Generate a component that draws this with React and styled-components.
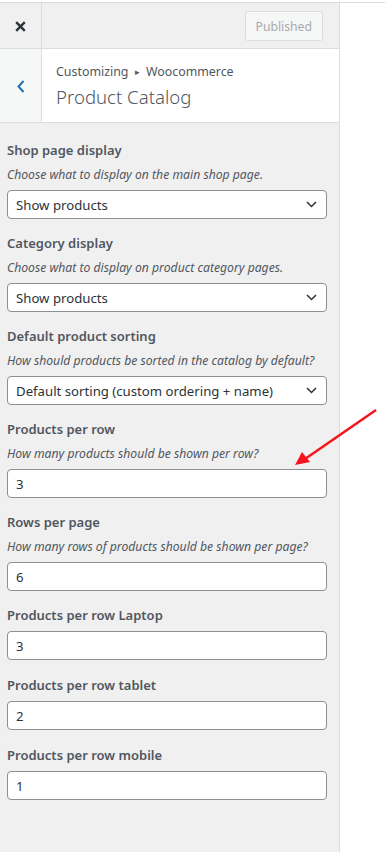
import React from 'react';
import styled, { createGlobalStyle } from 'styled-components';

const GlobalStyle = createGlobalStyle`
  html, body { margin: 0; padding: 0; background: #fff; }
  body { font-family: "Noto Sans", "Open Sans", sans-serif; color: #50575e; }
  * { box-sizing: border-box; }
`;

const fields = [
  { label: 'Shop page display', desc: 'Choose what to display on the main shop page.', type: 'select', value: 'Show products' },
  { label: 'Category display', desc: 'Choose what to display on product category pages.', type: 'select', value: 'Show products' },
  { label: 'Default product sorting', desc: 'How should products be sorted in the catalog by default?', type: 'select', value: 'Default sorting (custom ordering + name)' },
  { label: 'Products per row', desc: 'How many products should be shown per row?', type: 'input', value: '3' },
  { label: 'Rows per page', desc: 'How many rows of products should be shown per page?', type: 'input', value: '6' },
  { label: 'Products per row Laptop', type: 'input', value: '3' },
  { label: 'Products per row tablet', type: 'input', value: '2' },
  { label: 'Products per row mobile', type: 'input', value: '1' },
];

export default function App() {
  return (
    <>
      <GlobalStyle />
      <Page>
        <Panel>
          <TopBar>
            <CloseButton>
              <svg width="11" height="11" viewBox="0 0 11 11">
                <path d="M1.2 1.2 L9.8 9.8 M9.8 1.2 L1.2 9.8" stroke="#2c3338" strokeWidth="2.4" />
              </svg>
            </CloseButton>
            <TopActions>
              <PublishButton>Published</PublishButton>
            </TopActions>
          </TopBar>
          <TitleBar>
            <BackButton>
              <svg width="8" height="13" viewBox="0 0 8 13">
                <path d="M6.5 1 L1.5 6.5 L6.5 12" stroke="#2271b1" strokeWidth="2" fill="none" />
              </svg>
            </BackButton>
            <TitleText>
              <Crumb>Customizing <Tri>▸</Tri> Woocommerce</Crumb>
              <Title>Product Catalog</Title>
            </TitleText>
          </TitleBar>
          <Controls>
            {fields.map((f, i) => (
              <Control key={i} hasDesc={!!f.desc}>
                <Label hasDesc={!!f.desc}>{f.label}</Label>
                {f.desc && <Desc>{f.desc}</Desc>}
                {f.type === 'select' ? (
                  <SelectBox>
                    <span>{f.value}</span>
                    <svg width="11" height="7" viewBox="0 0 11 7">
                      <path d="M1 1 L5.5 5.5 L10 1" stroke="#2c3338" strokeWidth="1.5" fill="none" />
                    </svg>
                  </SelectBox>
                ) : (
                  <InputBox>{f.value}</InputBox>
                )}
              </Control>
            ))}
          </Controls>
        </Panel>
        <Arrow width="90" height="65" viewBox="0 0 90 65">
          <line x1="85" y1="2" x2="14" y2="51" stroke="#f5141c" strokeWidth="2.5" />
          <polygon points="4,57 11,44 19,54" fill="#f5141c" />
        </Arrow>
      </Page>
    </>
  );
}

const Page = styled.div`
  position: relative;
  margin-top: 2px;
  border-top: 1px solid #dcdcde;
  height: 850px;
  overflow: hidden;
`;

const Panel = styled.div`
  width: 340px;
  height: 100%;
  background: #f0f0f1;
  border-right: 1px solid #dcdcde;
`;

const TopBar = styled.div`
  display: flex;
  height: 46px;
  border-bottom: 1px solid #dcdcde;
`;

const CloseButton = styled.div`
  width: 42px;
  border-right: 1px solid #dcdcde;
  display: flex;
  align-items: center;
  justify-content: center;
  padding-top: 2px;
`;

const TopActions = styled.div`
  flex: 1;
  display: flex;
  justify-content: flex-end;
  align-items: center;
  padding-right: 16px;
  padding-top: 1px;
`;

const PublishButton = styled.div`
  height: 30px;
  padding: 0 10px;
  border: 1px solid #dcdcde;
  border-radius: 3px;
  background: #f6f7f7;
  color: #a7aaad;
  font-size: 12.2px;
  display: flex;
  align-items: center;
`;

const TitleBar = styled.div`
  display: flex;
  height: 74px;
  background: #fff;
  border-bottom: 1px solid #dcdcde;
`;

const BackButton = styled.div`
  width: 42px;
  background: #f6f7f7;
  border-right: 1px solid #dcdcde;
  display: flex;
  align-items: center;
  justify-content: center;
  padding-top: 2px;
`;

const TitleText = styled.div`
  padding: 13px 0 0 14px;
`;

const Crumb = styled.div`
  font-size: 12.4px;
  line-height: 20px;
  color: #50575e;
`;

const Tri = styled.span`
  font-size: 9px;
  vertical-align: 1px;
  margin: 0 3px;
`;

const Title = styled.div`
  font-size: 18.6px;
  font-weight: 300;
  line-height: 28px;
  color: #50575e;
  margin-top: 1px;
`;

const Controls = styled.div`
  padding: 17px 12px 0 7px;
`;

const Control = styled.div`
  margin-bottom: ${p => (p.hasDesc ? '14px' : '15px')};
`;

const Label = styled.div`
  font-size: 13px;
  font-weight: 600;
  line-height: 20px;
  color: #50575e;
  margin-bottom: ${p => (p.hasDesc ? '5px' : '6px')};
`;

const Desc = styled.div`
  font-size: 12.2px;
  font-style: italic;
  line-height: 20px;
  color: #50575e;
  margin-bottom: 5px;
  white-space: nowrap;
`;

const fieldBase = `
  width: 320px;
  height: 29px;
  background: #fff;
  border: 1px solid #8c8f94;
  border-radius: 4px;
  font-size: 13.2px;
  color: #2c3338;
  display: flex;
  align-items: center;
`;

const SelectBox = styled.div`
  ${fieldBase}
  justify-content: space-between;
  padding: 0 9px 0 8px;
`;

const InputBox = styled.div`
  ${fieldBase}
  padding: 0 8px;
`;

const Arrow = styled.svg`
  position: absolute;
  top: 405px;
  left: 291px;
`;
